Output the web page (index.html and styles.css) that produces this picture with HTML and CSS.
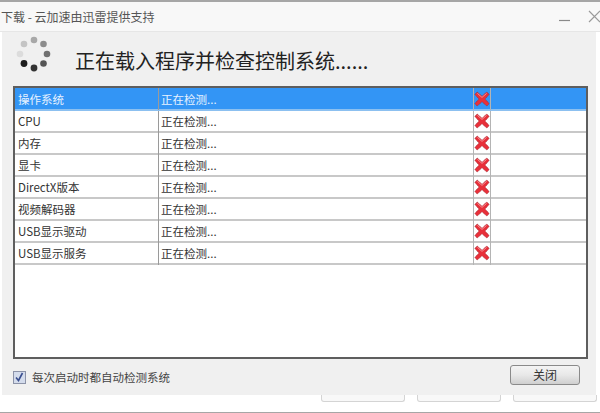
FILE: index.html
```html
<!DOCTYPE html>
<html lang="zh-CN">
<head>
<meta charset="utf-8">
<title>下载</title>
<link rel="stylesheet" href="styles.css">
</head>
<body>
<div class="window">
  <header class="titlebar">
    <span class="title">下载 - 云加速由迅雷提供支持</span>
    <span class="winbtns">
      <svg width="12" height="12" viewBox="0 0 12 12"><path d="M0 9.5H11" stroke="#8a8a8a" stroke-width="1.2"/></svg>
      <svg width="13" height="13" viewBox="0 0 13 13"><path d="M1 1L12 12M12 1L1 12" stroke="#9a9a9a" stroke-width="1.2"/></svg>
    </span>
  </header>
  <main class="dialog">
    <div class="head">
      <svg class="spinner" width="36" height="36" viewBox="0 0 36 36">
        <circle cx="18" cy="4" r="3.3" fill="#a8a8a8"/>
        <circle cx="27.5" cy="8" r="3.3" fill="#8c8c8c"/>
        <circle cx="31" cy="18" r="3.3" fill="#707070"/>
        <circle cx="27.5" cy="27.5" r="3.3" fill="#555"/>
        <circle cx="18" cy="32" r="3.4" fill="#333"/>
        <circle cx="8" cy="27.5" r="3.4" fill="#1c1c1c"/>
        <circle cx="4" cy="18" r="3.3" fill="#dcdcdc"/>
        <circle cx="8" cy="8" r="3.3" fill="#c4c4c4"/>
      </svg>
      <h1 class="heading">正在载入程序并检查控制系统......</h1>
    </div>
    <div class="list">
      <div class="row selected"><span class="c1">操作系统</span><span class="c2">正在检测...</span><span class="c3"><svg class="x" viewBox="0 0 16 16"><use href="#cross"/></svg></span><span class="c4"></span></div>
      <div class="row"><span class="c1">CPU</span><span class="c2">正在检测...</span><span class="c3"><svg class="x" viewBox="0 0 16 16"><use href="#cross"/></svg></span><span class="c4"></span></div>
      <div class="row"><span class="c1">内存</span><span class="c2">正在检测...</span><span class="c3"><svg class="x" viewBox="0 0 16 16"><use href="#cross"/></svg></span><span class="c4"></span></div>
      <div class="row"><span class="c1">显卡</span><span class="c2">正在检测...</span><span class="c3"><svg class="x" viewBox="0 0 16 16"><use href="#cross"/></svg></span><span class="c4"></span></div>
      <div class="row"><span class="c1">DirectX版本</span><span class="c2">正在检测...</span><span class="c3"><svg class="x" viewBox="0 0 16 16"><use href="#cross"/></svg></span><span class="c4"></span></div>
      <div class="row"><span class="c1">视频解码器</span><span class="c2">正在检测...</span><span class="c3"><svg class="x" viewBox="0 0 16 16"><use href="#cross"/></svg></span><span class="c4"></span></div>
      <div class="row"><span class="c1">USB显示驱动</span><span class="c2">正在检测...</span><span class="c3"><svg class="x" viewBox="0 0 16 16"><use href="#cross"/></svg></span><span class="c4"></span></div>
      <div class="row"><span class="c1">USB显示服务</span><span class="c2">正在检测...</span><span class="c3"><svg class="x" viewBox="0 0 16 16"><use href="#cross"/></svg></span><span class="c4"></span></div>
    </div>
    <div class="foot">
      <label class="check">
        <span class="box"><svg width="9" height="10" viewBox="0 0 9 10"><path d="M1 5.5L3.5 8.5L7.5 1" fill="none" stroke="#3a4f8f" stroke-width="1.6"/></svg></span>
        每次启动时都自动检测系统
      </label>
      <button class="close">关闭</button>
    </div>
  </main>
  <div class="behind">
    <span class="ghost g1"></span><span class="ghost g2"></span><span class="ghost g3"></span>
  </div>
</div>
<svg class="defs" width="0" height="0">
  <symbol id="cross" viewBox="0 0 16 16">
    <path d="M3.2 1L8 5.2L12.8 1L15.2 3.4L11 8L15.2 12.6L12.8 15L8 10.8L3.2 15L0.8 12.6L5 8L0.8 3.4Z" fill="#e8303a" stroke="#9c2a34" stroke-width="0.7" stroke-dasharray="1.2 0.6"/>
    <path d="M3.4 2.4L8 6.4L12.6 2.4" fill="none" stroke="#f78c92" stroke-width="1"/>
  </symbol>
</svg>
</body>
</html>
```
FILE: styles.css
```css
* { box-sizing: border-box; }
html, body { margin: 0; padding: 0; }
body {
  width: 600px;
  height: 413px;
  overflow: hidden;
  background: #fff;
  font-family: "Noto Sans CJK SC", "Liberation Sans", sans-serif;
  color: #333;
}
.window {
  height: 413px;
  display: flex;
  flex-direction: column;
  border-top: 2px solid #a6a6a6;
  border-bottom: 1px solid #a6a6a6;
}
.titlebar {
  height: 30px;
  flex: none;
  background: #f8f8f8;
  border-bottom: 1px solid #e6e6e6;
  display: flex;
  align-items: center;
  justify-content: space-between;
  padding: 0 0 0 1px;
}
.title { font-size: 12px; color: #555; line-height: 30px; }
.winbtns { display: flex; align-items: center; gap: 17px; margin-top: 0; margin-right: -1px; }
.dialog {
  height: 363px;
  flex: none;
  margin: 0 4px 0 2px;
  background: #f0f0f0;
  padding: 0 8px 0 11px;
  display: flex;
  flex-direction: column;
}
.head { height: 54px; flex: none; display: flex; align-items: center; padding-left: 3px; }
.spinner { flex: none; align-self: flex-start; margin-top: 4px; }
.heading {
  margin: 4px 0 0 23px;
  font-size: 20px;
  font-weight: 400;
  color: #222;
  line-height: 28px;
}
.list {
  height: 273px;
  flex: none;
  background: #fff;
  border: 2px solid #5e5e5e;
}
.row {
  height: 22px;
  display: flex;
  border-bottom: 2px solid #c8c8c8;
  font-size: 11.5px;
  line-height: 20px;
  color: #333;
}
.row.selected { height: 23px; line-height: 23px; background: #3395f5; color: #e8f2ff; border-bottom-color: #8cc0f0; }
.row span { height: 22px; }
.c1 { width: 144px; padding-left: 3px; border-right: 1px solid #9a9a9a; flex: none; }
.c2 { width: 315px; padding-left: 2px; border-right: 1px solid #b4b4b4; flex: none; }
.row .c3 { width: 17px; border-right: 1px solid #b4b4b4; flex: none; display: flex; align-items: flex-start; justify-content: center; padding-top: 2px; }
.row.selected .c3 { padding-top: 3px; }
.c4 { flex: 1; }
.x { width: 16px; height: 16px; flex: none; }
.defs { position: absolute; }
.foot {
  flex: 1;
  display: flex;
  align-items: flex-start;
  justify-content: space-between;
  padding: 6px 8px 0 0;
}
.check { display: flex; align-items: center; gap: 6px; font-size: 11.5px; color: #444; line-height: 20px; margin-top: 2px; }
.box {
  width: 13px; height: 13px;
  border: 1px solid #8c93a8;
  background: #d4dcec;
  display: flex; align-items: center; justify-content: center;
}
.close {
  width: 70px; height: 20px;
  border: 1px solid #8a8a8a;
  border-radius: 3px;
  background: linear-gradient(#f4f4f4, #e8e8e8 50%, #cfcfcf);
  font: inherit;
  font-size: 12px;
  line-height: 16px;
  color: #333;
  padding: 0;
}
.behind { flex: 1; display: flex; justify-content: flex-end; align-items: flex-start; gap: 12px; padding-right: 3px; }
.ghost {
  height: 7px;
  border: 1px solid #d4d4d4;
  border-top: 0;
  border-radius: 0 0 3px 3px;
  background: #f8f8f8;
}
.g1 { width: 84px; }
.g2 { width: 84px; }
.g3 { width: 84px; }
```
